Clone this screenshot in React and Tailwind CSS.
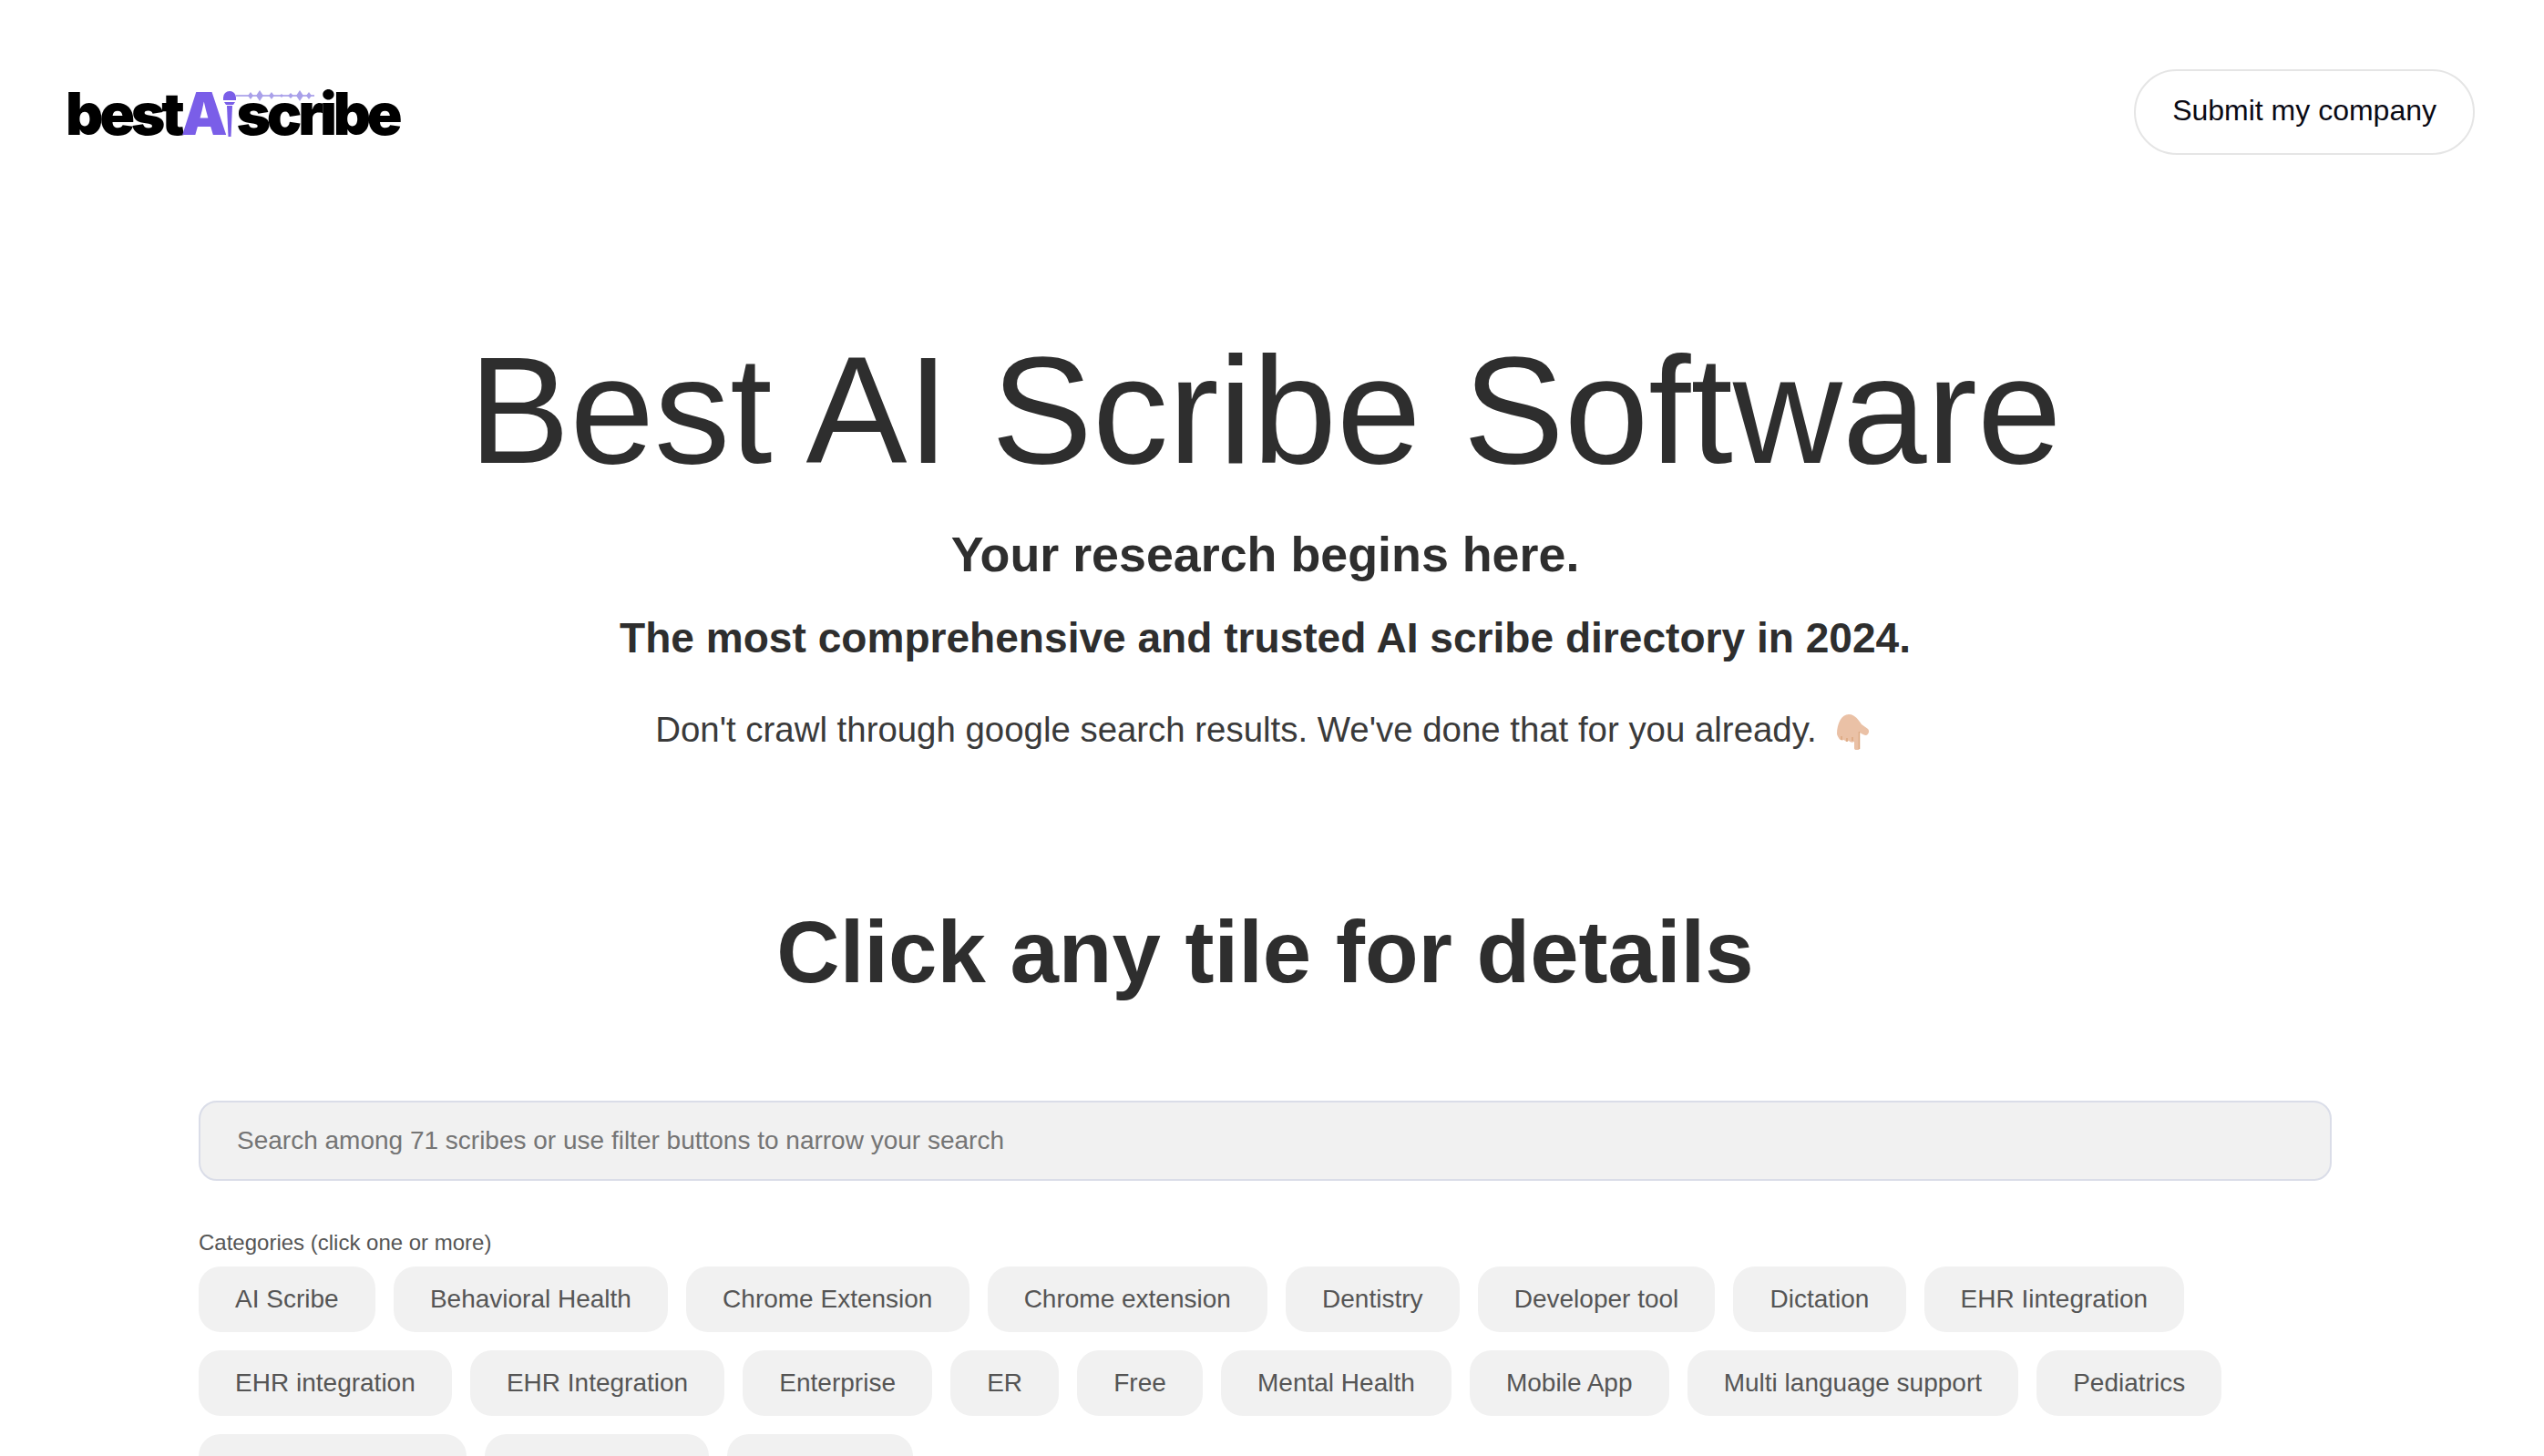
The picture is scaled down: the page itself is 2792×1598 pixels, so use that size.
const categories = [
  "AI Scribe", "Behavioral Health", "Chrome Extension", "Chrome extension", "Dentistry", "Developer tool", "Dictation", "EHR Iintegration",
  "EHR integration", "EHR Integration", "Enterprise", "ER", "Free", "Mental Health", "Mobile App", "Multi language support", "Pediatrics",
  "Physical Therapy", "Primary Care", "Radiology",
];

function Logo() {
  return (
    <div className="relative flex items-end mt-[4px] h-[52px] w-[364px] text-[64px] leading-[52px] font-black tracking-[-0.065em] text-black font-['Inter',sans-serif]">
      <span>best</span>
      <span className="text-[#7a5ee8]">A</span>
      <svg width="14" height="52" viewBox="0 0 14 52" className="shrink-0">
        <path d="M0 8a7 7 0 0 1 14 0v3H0z" fill="#7a5ee8" />
        <path d="M1 13h12l-2 3H3z" fill="#7a5ee8" />
        <path d="M4 17h6l-1.5 34h-3z" fill="#7a5ee8" />
      </svg>
      <span>scribe</span>
      <svg width="86" height="14" viewBox="0 0 86 14" className="absolute left-[187px] top-0">
        <path d="M0 6h86" stroke="#9d92e6" strokeWidth="1.5" />
        <path d="M16 2l3 4-3 4-3-4zM26 0l4 6-4 6-4-6zM39 2l3 4-3 4-3-4zM50 4l2 2-2 2-2-2zM60 3l3 3-3 3-3-3zM70 0l4 6-4 6-4-6zM80 2l3 4-3 4-3-4z" fill="#a9a0ea" />
      </svg>
    </div>
  );
}

function PointDown() {
  return (
    <svg width="35" height="39" viewBox="0 0 35 39" className="inline-block align-[-9px] ml-[22px] mr-[7px]">
      <path d="M0 22C0 10 5 0 13 0c5 0 9 3 14 11l7 5c2 2 1 6-2 7-2 0-5-2-7-3v17c0 3-6 3-6 0v-7c-2 1-4 1-6-1-2 1-4 1-5-1-3 1-5 0-6-2-1-2-2-3-2-5z" fill="#eac1a6" />
      <path d="M24.500 19v19M5 24v4M11 26v4M17 25v4" stroke="#dca77f" strokeWidth="1.500" fill="none" />
    </svg>
  );
}

export default function App() {
  return (
    <div className="h-screen overflow-hidden pr-[15px] bg-white text-[#2e2e2e] font-['Liberation_Sans',sans-serif]">
      <header className="flex items-center justify-between pt-[76px] pl-[72px] pr-[61px]">
        <Logo />
        <a className="flex items-center h-[94px] px-[40px] pb-[4px] rounded-full border-2 border-[#e5e5e5] text-[32px] text-[#0a0a14]">
          Submit my company
        </a>
      </header>

      <section className="flex flex-col items-center mt-[184px]">
        <h1 className="text-[166.400px] leading-[192px] font-normal">Best AI Scribe Software</h1>
        <h2 className="mt-[31px] text-[53.800px] leading-[62px] font-bold">Your research begins here.</h2>
        <h3 className="mt-[33px] text-[46.080px] leading-[56px] font-bold">The most comprehensive and trusted AI scribe directory in 2024.</h3>
        <p className="mt-[49px] text-[38.400px] leading-[48px] text-[#3a3a3a]">
          Don't crawl through google search results. We've done that for you already.
          <PointDown />
        </p>
        <h2 className="mt-[162px] text-[96px] leading-[116px] font-bold">Click any tile for details</h2>
      </section>

      <section className="mx-[218px] mt-[105px]">
        <input
          placeholder="Search among 71 scribes or use filter buttons to narrow your search"
          className="w-full h-[88px] px-[40px] rounded-[20px] border-2 border-[#dadde8] bg-[#f1f1f1] text-[28px] placeholder:text-[#757575]"
        />
        <div className="mt-[52px] text-[24px] leading-[32px] text-[#555555]">Categories (click one or more)</div>
        <div className="flex flex-wrap gap-[20px] mt-[10px]">
          {categories.map((c) => (
            <button key={c} className="h-[72px] px-[40.100px] rounded-[24px] bg-[#f1f1f1] text-[28px] text-[#555555]">
              {c}
            </button>
          ))}
        </div>
      </section>
    </div>
  );
}
